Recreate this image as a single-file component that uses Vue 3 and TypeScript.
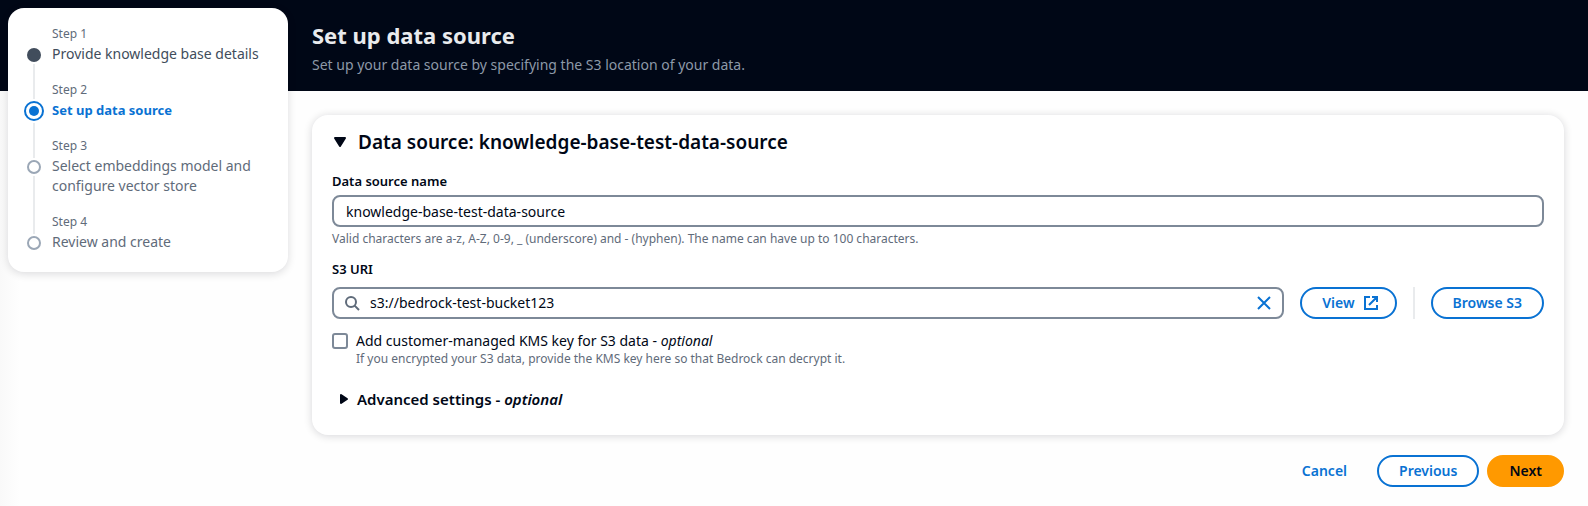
<script setup lang="ts">
import { computed, ref } from 'vue'

interface Step {
  title: string
  state: 'done' | 'current' | 'todo'
}

const steps: Step[] = [
  { title: 'Provide knowledge base details', state: 'done' },
  { title: 'Set up data source', state: 'current' },
  { title: 'Select embeddings model and configure vector store', state: 'todo' },
  { title: 'Review and create', state: 'todo' },
]

const name = ref('knowledge-base-test-data-source')
const uri = ref('s3://bedrock-test-bucket123')
const useKmsKey = ref(false)
const sourceOpen = ref(true)
const advancedOpen = ref(false)
const heading = computed(() => `Data source: ${name.value}`)
</script>

<template>
  <div class="page">
    <header class="banner">
      <h1>Set up data source</h1>
      <p>Set up your data source by specifying the S3 location of your data.</p>
    </header>

    <nav class="steps" aria-label="Steps">
      <ol>
        <li v-for="(step, i) in steps" :key="step.title" :class="step.state">
          <span class="track">
            <svg v-if="step.state === 'done'" class="dot" viewBox="0 0 14 14"><circle cx="7" cy="7" r="7" /></svg>
            <svg v-else-if="step.state === 'current'" class="dot big" viewBox="0 0 20 20">
              <circle class="ring" cx="10" cy="10" r="9" /><circle cx="10" cy="10" r="5" />
            </svg>
            <svg v-else class="dot" viewBox="0 0 14 14"><circle class="ring" cx="7" cy="7" r="6" /></svg>
          </span>
          <div class="step-text">
            <span class="step-number">Step {{ i + 1 }}</span>
            <a v-if="step.state === 'done'" href="#" class="step-title">{{ step.title }}</a>
            <span v-else class="step-title" :aria-current="step.state === 'current' ? 'step' : undefined">{{ step.title }}</span>
          </div>
        </li>
      </ol>
    </nav>

    <main>
      <section class="card">
        <h2>
          <button class="expander" type="button" :aria-expanded="sourceOpen" @click="sourceOpen = !sourceOpen">
            <svg class="caret" :class="{ closed: !sourceOpen }" viewBox="0 0 16 16"><path d="M3 4h10l-5 8z" /></svg>
            {{ heading }}
          </button>
        </h2>

        <div v-show="sourceOpen">
          <div class="field">
            <label for="source-name">Data source name</label>
            <input id="source-name" v-model="name" class="text-box" type="text" aria-describedby="name-hint" />
            <p id="name-hint" class="hint">Valid characters are a-z, A-Z, 0-9, _ (underscore) and - (hyphen). The name can have up to 100 characters.</p>
          </div>

          <div class="field uri-field">
            <label for="uri">S3 URI</label>
            <div class="uri-row">
              <div class="text-box search">
                <svg class="icon" viewBox="0 0 16 16"><circle cx="7" cy="7" r="5" /><path d="M10.6 10.6 15 15" /></svg>
                <input id="uri" v-model="uri" type="text" />
                <button class="clear" type="button" aria-label="Clear" @click="uri = ''">
                  <svg class="icon" viewBox="0 0 16 16"><path d="m2 2 12 12M14 2 2 14" /></svg>
                </button>
              </div>
              <button class="button with-icon" type="button">
                View
                <svg class="icon" viewBox="0 0 16 16"><path d="M7 2H2v12h12V10M9 2h5v5M6 10l8-8" /></svg>
              </button>
              <span class="divider"></span>
              <button class="button" type="button">Browse S3</button>
            </div>
          </div>

          <div class="check">
            <input id="kms" v-model="useKmsKey" type="checkbox" aria-describedby="kms-hint" />
            <div>
              <label for="kms">Add customer-managed KMS key for S3 data - <i>optional</i></label>
              <p id="kms-hint" class="hint">If you encrypted your S3 data, provide the KMS key here so that Bedrock can decrypt it.</p>
            </div>
          </div>

          <h3>
            <button class="expander" type="button" :aria-expanded="advancedOpen" @click="advancedOpen = !advancedOpen">
              <svg class="caret" :class="{ closed: !advancedOpen }" viewBox="0 0 16 16"><path d="M4 5h8l-4 6z" /></svg>
              <span>Advanced settings - <i>optional</i></span>
            </button>
          </h3>
        </div>
      </section>

      <footer>
        <button class="button plain" type="button">Cancel</button>
        <button class="button" type="button">Previous</button>
        <button class="button primary" type="button">Next</button>
      </footer>
    </main>
  </div>
</template>

<style>
body {
  background: #fefefe;
}
</style>

<style scoped>
.page {
  display: grid;
  grid-template-columns: 280px minmax(0, 1fr);
  grid-template-rows: 91px auto;
  column-gap: 24px;
  padding: 0 24px 0 8px;
  min-height: 100vh;
  box-sizing: border-box;
  font-family: 'Noto Sans', 'Open Sans', sans-serif;
  font-size: 14px;
  line-height: 20px;
  color: #000716;
  background: linear-gradient(to right, #f9f9f9, #fefefe 20px);
}

h1, h2, h3, p, ol {
  margin: 0;
  padding: 0;
}

button, input {
  font: inherit;
  color: inherit;
}

button {
  cursor: pointer;
}

.banner {
  grid-area: 1 / 1 / 2 / 3;
  margin: 0 -24px 0 -8px;
  padding: 19px 24px 0 312px;
  background: #000716;
  color: #8d99a8;
}

.banner h1 {
  margin-bottom: 4px;
  color: #e9ebed;
  font-size: 22px;
  line-height: 32px;
  font-weight: 700;
}

.steps {
  grid-area: 1 / 1 / 3 / 2;
  align-self: start;
  z-index: 1;
  margin-top: 8px;
  padding: 18px 16px 20px;
  border-radius: 16px;
  background: #fff;
  box-shadow: 0 2px 8px rgba(0, 7, 22, 0.14);
}

.steps ol {
  list-style: none;
}

.steps li {
  display: flex;
  gap: 8px;
  color: #5f6b7a;
}

.track {
  display: flex;
  flex: 0 0 20px;
  flex-direction: column;
  align-items: center;
  gap: 2px;
}

.track::before,
.track::after {
  content: '';
  width: 2px;
  background: #e9ebed;
}

.track::before {
  height: 20px;
}

.track::after {
  flex: 1;
}

.steps li:first-child .track::before,
.steps li:last-child .track::after {
  background: none;
}

.current .track::before {
  height: 17px;
}

.dot {
  flex: none;
  width: 14px;
  height: 14px;
  fill: #414d5c;
}

.dot.big {
  width: 20px;
  height: 20px;
  fill: #0972d3;
}

.dot .ring {
  fill: none;
  stroke: #9ba7b6;
  stroke-width: 2;
}

.dot.big .ring {
  stroke: #0972d3;
}

.step-text {
  padding-bottom: 18px;
}

.steps li:last-child .step-text {
  padding-bottom: 0;
}

.step-number,
.step-title {
  display: block;
}

.step-number {
  padding-bottom: 2px;
  font-size: 12px;
  line-height: 16px;
}

.step-title {
  color: inherit;
  text-decoration: none;
}

.done .step-title {
  color: #414d5c;
}

.current .step-title {
  color: #0972d3;
  font-size: 13px;
  font-weight: 700;
}

main {
  grid-area: 2 / 2 / 3 / 3;
  padding-top: 24px;
}

.card {
  padding: 14px 20px 26px;
  border-radius: 16px;
  background: #fff;
  box-shadow: 0 1px 8px rgba(0, 7, 22, 0.16);
}

.expander {
  display: flex;
  align-items: center;
  padding: 0;
  border: 0;
  background: none;
}

h2 {
  margin-bottom: 16px;
  font-size: 19px;
  line-height: 26px;
  font-weight: 600;
}

h2 .expander {
  gap: 10px;
}

h3 {
  margin-top: 22px;
  font-size: 15px;
  line-height: 20px;
  font-weight: 600;
}

h3 .expander {
  padding-left: 4px;
  gap: 5px;
}

.caret {
  width: 16px;
  height: 16px;
  fill: currentColor;
  stroke: currentColor;
  stroke-width: 2;
  stroke-linejoin: round;
}

.caret.closed {
  transform: rotate(-90deg);
}

.field label {
  display: block;
  margin-bottom: 4px;
  font-size: 13px;
  font-weight: 600;
}

.text-box {
  display: block;
  box-sizing: border-box;
  width: 100%;
  height: 32px;
  padding: 0 12px;
  border: 2px solid #7d8998;
  border-radius: 8px;
  background: #fff;
}

.hint {
  color: #5f6b7a;
  font-size: 12px;
  line-height: 16px;
}

.field .hint {
  margin-top: 4px;
}

.uri-field {
  margin-top: 12px;
}

.uri-field label {
  margin-bottom: 8px;
}

.uri-row {
  display: flex;
  gap: 16px;
}

.search {
  display: flex;
  flex: 1;
  align-items: center;
  gap: 10px;
  padding: 0 10px;
  color: #5f6b7a;
}

.search input {
  flex: 1;
  min-width: 0;
  padding: 0;
  border: 0;
  outline: 0;
  background: none;
  color: #000716;
}

.icon {
  flex: none;
  width: 16px;
  height: 16px;
  fill: none;
  stroke: currentColor;
  stroke-width: 2;
}

.clear {
  display: flex;
  padding: 0;
  border: 0;
  background: none;
  color: #0972d3;
}

.divider {
  width: 2px;
  background: #e9ebed;
}

.button {
  display: flex;
  align-items: center;
  justify-content: center;
  gap: 8px;
  height: 32px;
  padding: 0 20px;
  border: 2px solid #0972d3;
  border-radius: 16px;
  background: #fff;
  color: #0972d3;
  font-size: 14px;
  font-weight: 600;
}

.button.with-icon {
  padding-right: 16px;
}

.button.plain {
  border-color: transparent;
  background: none;
}

.button.primary {
  border-color: #ff9900;
  background: #ff9900;
  color: #000716;
}

.check {
  display: flex;
  gap: 8px;
  margin-top: 12px;
}

.check input {
  appearance: none;
  flex: none;
  width: 16px;
  height: 16px;
  margin: 2px 0 0;
  border: 2px solid #7d8998;
  border-radius: 3px;
  background: #fff;
}

.check input:checked {
  border-color: #0972d3;
  background: #0972d3;
}

.check label {
  display: block;
}

footer {
  display: flex;
  justify-content: flex-end;
  gap: 8px;
  padding: 20px 0 19px;
}
</style>
